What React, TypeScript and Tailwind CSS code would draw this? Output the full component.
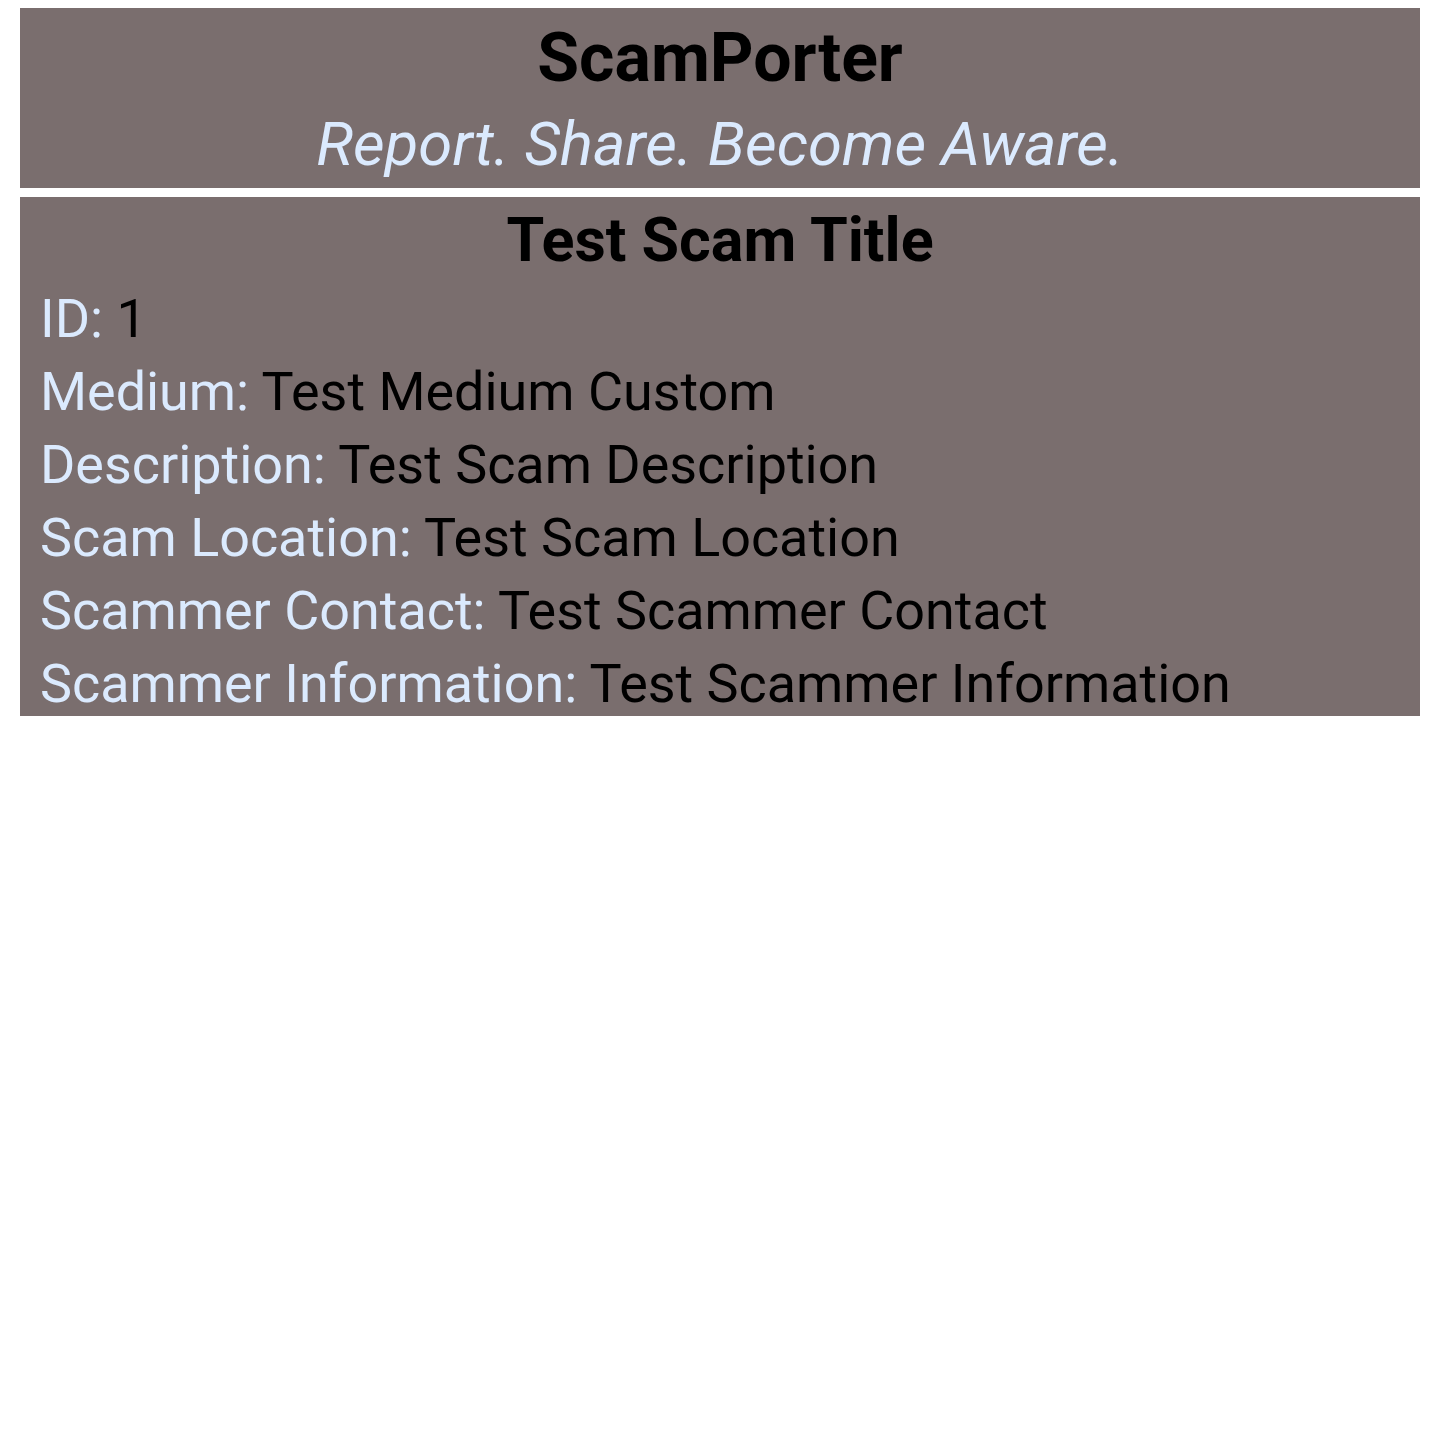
import React from "react";

const scam = {
  id: 1,
  title: "Test Scam Title",
  medium: "Test Medium Custom",
  description: "Test Scam Description",
  location: "Test Scam Location",
  contact: "Test Scammer Contact",
  information: "Test Scammer Information",
};

const Field: React.FC<{ label: string; value: React.ReactNode }> = ({ label, value }) => (
  <p className="text-[53.9px] leading-[73px]">
    <span className="text-[#dbeafe]">{label}:</span> <span className="text-black">{value}</span>
  </p>
);

const App: React.FC = () => {
  return (
    <div className="min-h-screen bg-white px-5 pt-2 font-['Roboto',sans-serif]">
      {/* Header */}
      <header className="bg-[#7a6e6e] text-center pt-[8px] pb-[4px]">
        <h1 className="text-[68px] leading-[84px] font-bold text-black">ScamPorter</h1>
        <p className="mt-[4px] text-[61.6px] leading-[80px] italic text-[#dbeafe]">Report. Share. Become Aware.</p>
      </header>

      {/* Scam details */}
      <section className="flow-root mt-[9px] bg-[#7a6e6e] px-5 pt-[7px]">
        <h2 className="text-center text-[61px] leading-[72px] font-bold text-black">{scam.title}</h2>
        <div className="mt-[6px] -mb-[4px]">
          <Field label="ID" value={scam.id} />
          <Field label="Medium" value={scam.medium} />
          <Field label="Description" value={scam.description} />
          <Field label="Scam Location" value={scam.location} />
          <Field label="Scammer Contact" value={scam.contact} />
          <Field label="Scammer Information" value={scam.information} />
        </div>
      </section>
    </div>
  );
};

export default App;
